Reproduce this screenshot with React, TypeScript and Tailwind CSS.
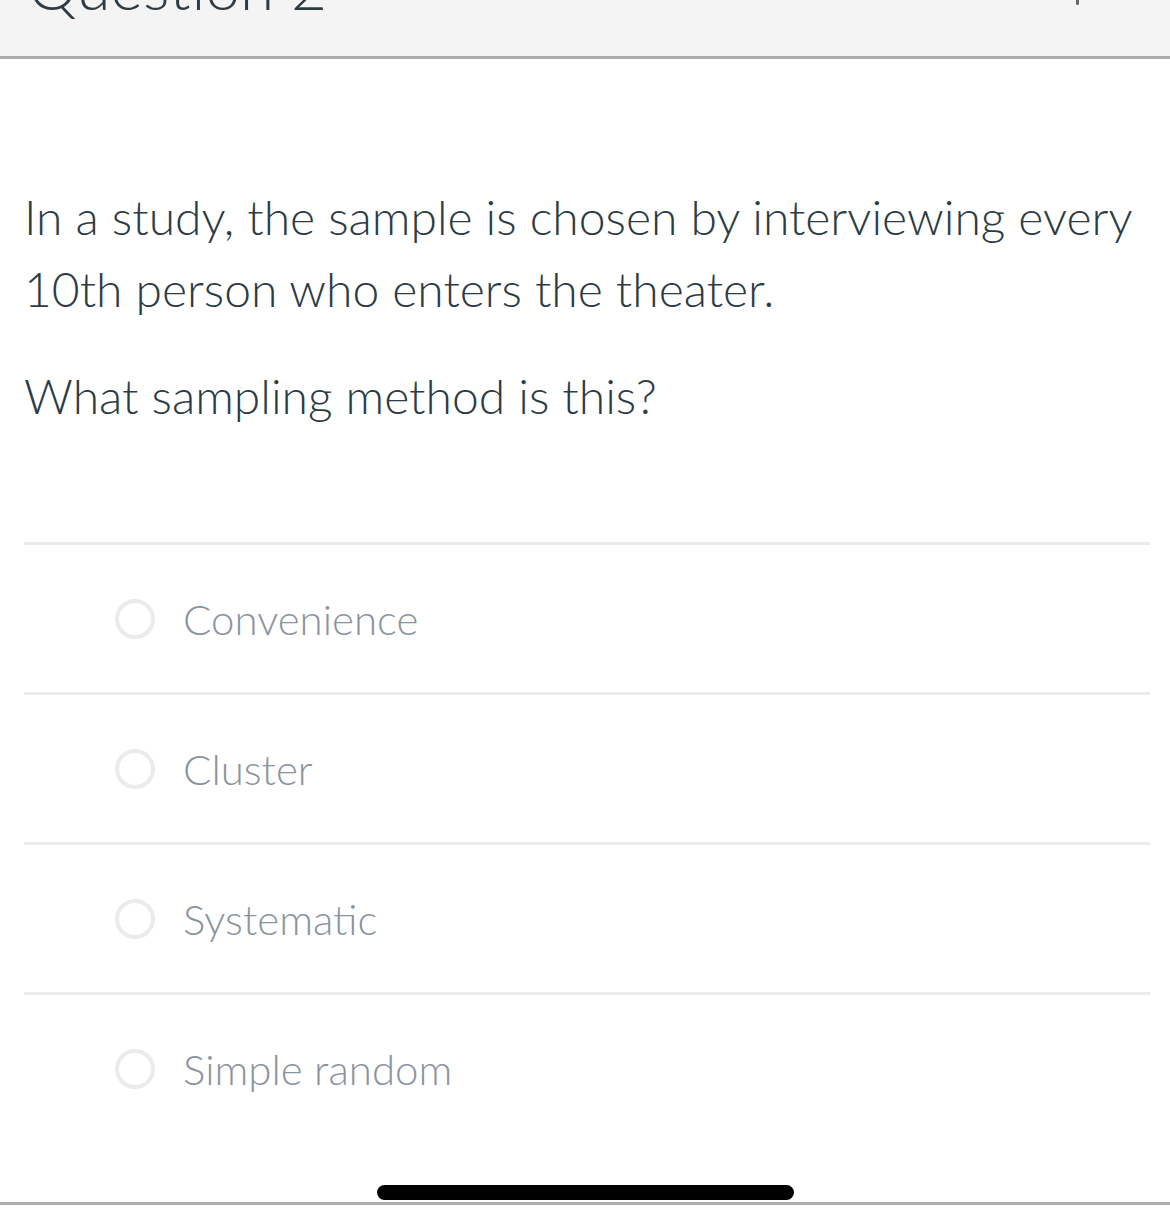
import React from "react";

const options = ["Convenience", "Cluster", "Systematic", "Simple random"];

export default function App() {
  return (
    <div className="w-[1170px] h-[1221px] bg-white overflow-hidden" style={{ fontFamily: "Lato, 'Open Sans', sans-serif" }}>
      <div className="h-[56px] bg-[#f4f4f4] border-b-[3px] border-[#adadad] box-content overflow-hidden relative">
        <div className="pl-[28px] text-[62px] leading-none font-light text-[#2d3b45] mt-[-45px]">Question 2</div>
        <div className="absolute left-[1076px] top-0 w-[3px] h-[5px] bg-[#666] rounded-b-sm" />
      </div>
      <div className="pl-[24px] pr-[20px]">
        <div className="text-[48px] leading-[72px] font-light text-[#2d3b45] pt-[122px]">
          <p>In a study, the sample is chosen by interviewing every 10th person who enters the theater.</p>
          <p className="mt-[35px]">What sampling method is this?</p>
        </div>
        <div className="mt-[110px]">
          {options.map((o) => (
            <div key={o} className="h-[150px] border-t-[3px] border-[#ebebeb] flex items-center">
              <div className="ml-[91px] w-[40px] h-[40px] rounded-full border-[4px] border-[#ebebeb]" />
              <div className="ml-[28px] text-[42px] font-light text-[#8b949e] leading-none">{o}</div>
            </div>
          ))}
        </div>
      </div>
      <div className="mt-[43px] flex justify-center">
        <div className="w-[417px] h-[15px] bg-black rounded-full" />
      </div>
      <div className="mt-[2px] h-[3px] bg-[#adadad]" />
    </div>
  );
}
